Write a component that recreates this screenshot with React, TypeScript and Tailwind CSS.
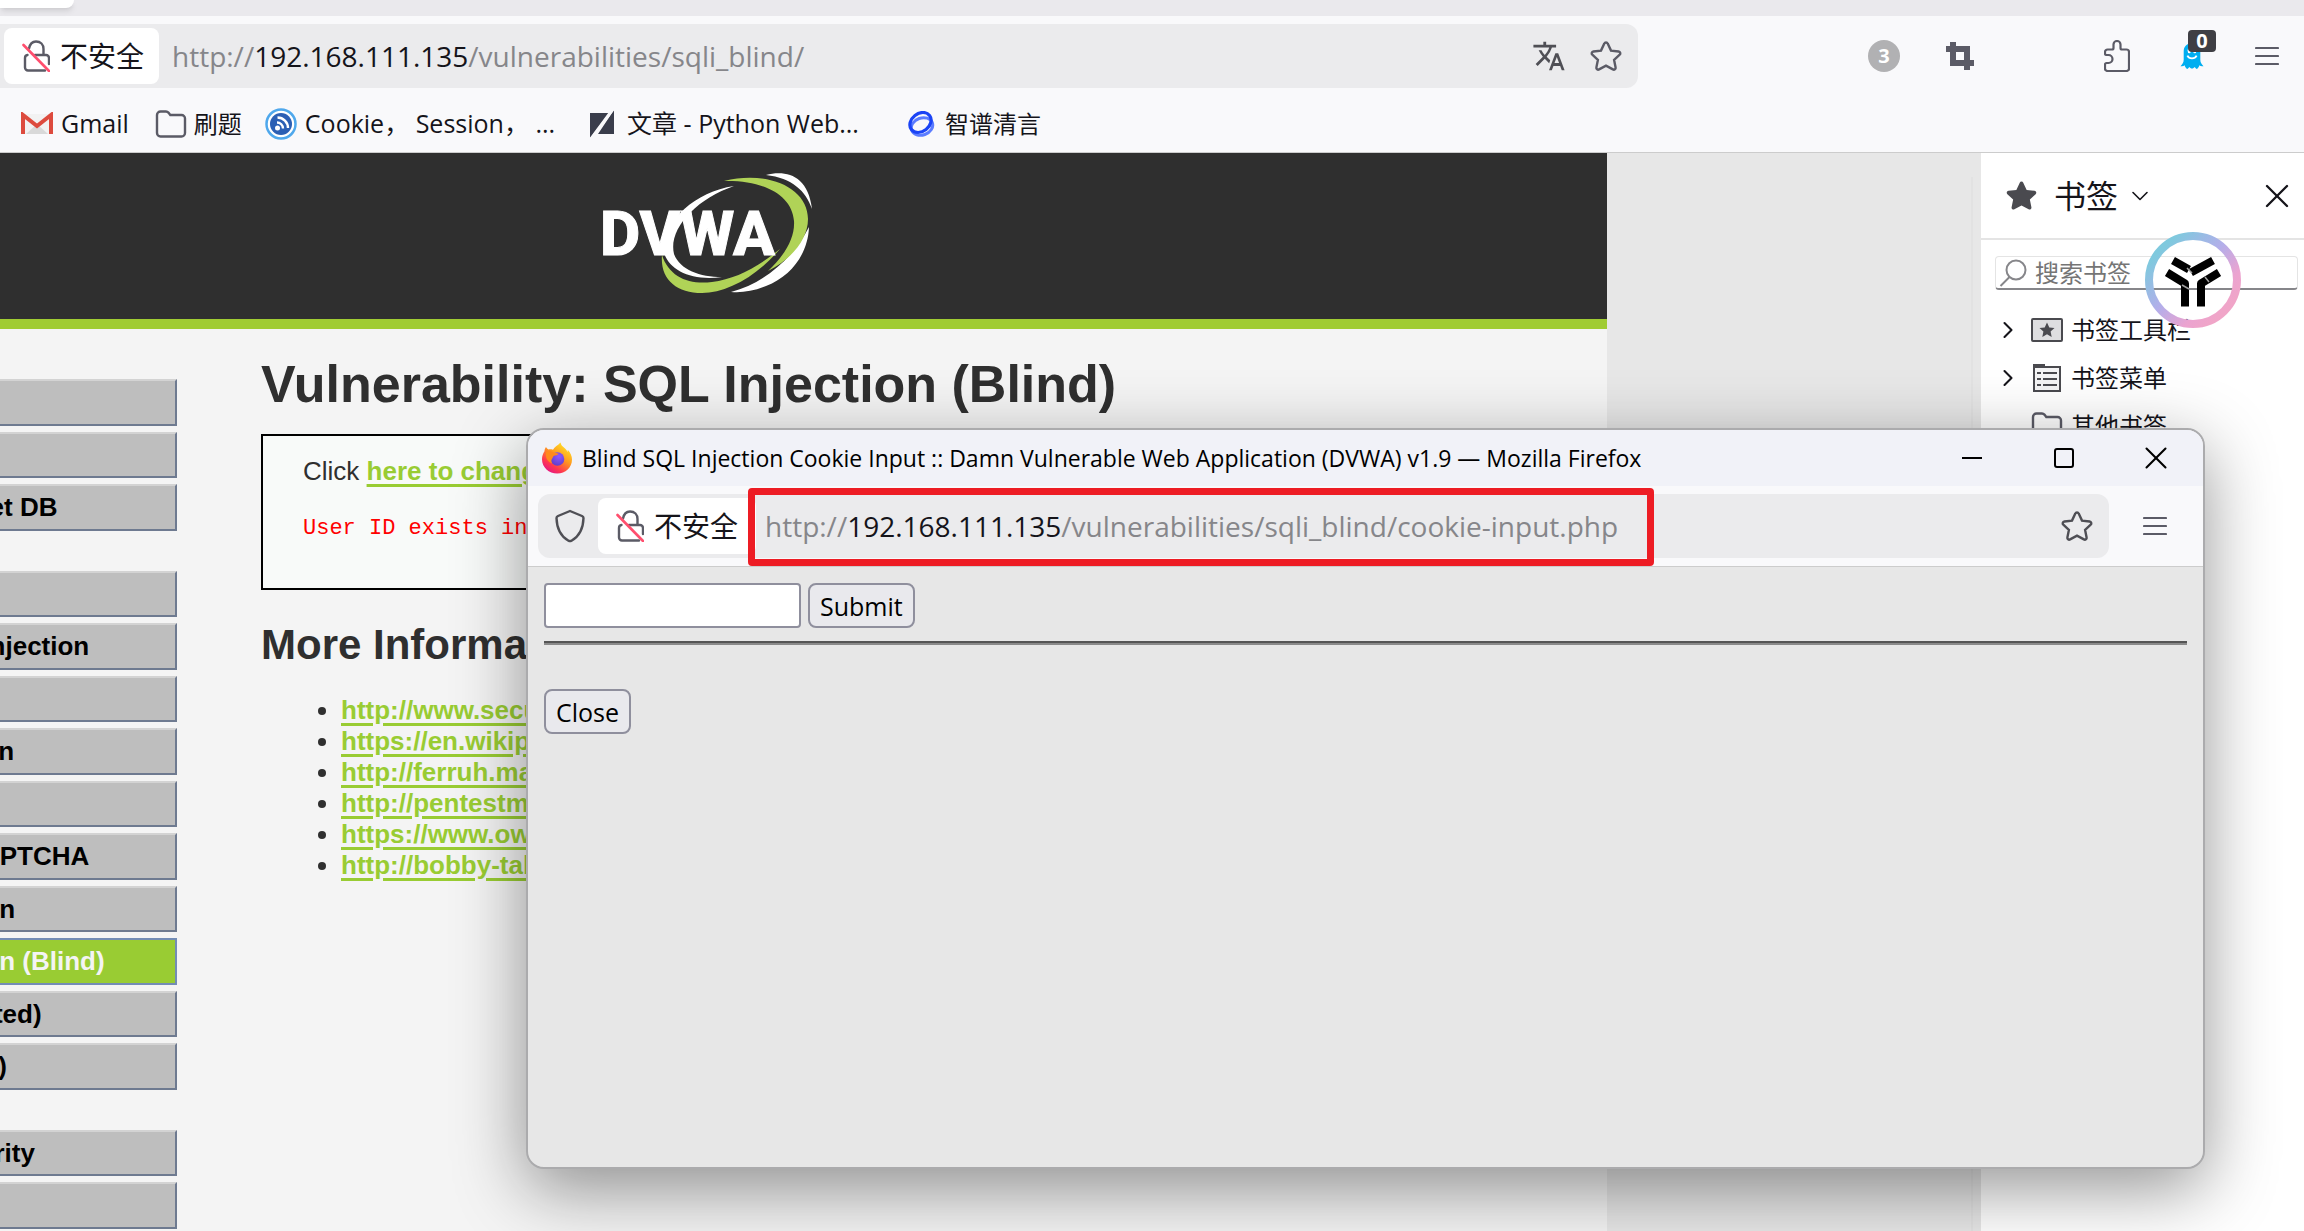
import type { ReactNode } from "react";
import { clsx } from "clsx";
import { ChevronDown, ChevronRight, X } from "lucide-react";
import { MdTranslate } from "react-icons/md";

type MenuItem = {
  label: string;
  startsGroup?: boolean;
  selected?: boolean;
};

const menuItems: MenuItem[] = [
  { label: "Home" },
  { label: "Instructions" },
  { label: "Setup / Reset DB" },
  { label: "Brute Force", startsGroup: true },
  { label: "Command Injection" },
  { label: "CSRF" },
  { label: "File Inclusion" },
  { label: "File Upload" },
  { label: "Insecure CAPTCHA" },
  { label: "SQL Injection" },
  { label: "SQL Injection (Blind)", selected: true },
  { label: "XSS (Reflected)" },
  { label: "XSS (Stored)" },
  { label: "DVWA Security", startsGroup: true },
  { label: "PHP Info" },
];

const moreLinks = [
  "http://www.securiteam.com",
  "https://en.wikipedia.org",
  "http://ferruh.mavituna.com",
  "http://pentestmonkey.net",
  "https://www.owasp.org",
  "http://bobby-tables.com",
];

const STAR =
  "M16 2.500c.8 0 1.400.4 1.700 1.100l3.300 7 7.600.9c1.700.2 2.300 2.100 1.100 3.200l-5.600 5.200 1.500 7.500c.3 1.600-1.300 2.800-2.700 2L16 25.700l-6.900 3.700c-1.400.8-3-.4-2.700-2l1.500-7.500-5.600-5.200c-1.200-1.100-.6-3 1.100-3.200l7.600-.9 3.300-7c.3-.7.9-1.100 1.700-1.100z";

function StarIcon({ filled = false, className }: { filled?: boolean; className?: string }) {
  return (
    <svg viewBox="0 0 32 32" className={className} fill={filled ? "currentColor" : "none"} stroke="currentColor" strokeWidth={filled ? 0 : 2.4}>
      <path d={STAR} />
    </svg>
  );
}

function InsecureLock() {
  return (
    <svg viewBox="0 0 28 32" className="h-8 w-7" fill="none" strokeLinecap="round">
      <path
        d="M7 8.500C8 3.500 11 1.500 14 1.500c4.500 0 7.500 3 7.500 7.500v6M13 15h11a3 3 0 0 1 3 3v6M5.500 15A3 3 0 0 0 3 18v9.500A3 3 0 0 0 6 30.500h17"
        stroke="#5b5b66"
        strokeWidth="2.400"
      />
      <path d="M1.500 5 27 31" stroke="#ff4f6e" strokeWidth="2.600" />
    </svg>
  );
}

function FolderIcon() {
  return (
    <svg viewBox="0 0 32 28" className="h-7 w-8 text-[#5b5b66]" fill="none" stroke="currentColor" strokeWidth="2.400">
      <path d="M2 5a3.500 3.500 0 0 1 3.500-3.500h5.500c1 0 1.800.4 2.400 1.100l1.900 2.400h11.200A3.500 3.500 0 0 1 30 8.500v14.500a3.500 3.500 0 0 1-3.500 3.500h-21A3.500 3.500 0 0 1 2 23z" />
    </svg>
  );
}

function GmailIcon() {
  return (
    <svg viewBox="0 0 32 24" className="h-6 w-8">
      <path d="M2 2h28v20H2z" fill="#f2f2f2" />
      <path d="M5 22 16 12l11 10z" fill="#d9d9d9" />
      <path d="M2 22V3l14 11L30 3v19" fill="none" stroke="#dd4b3e" strokeWidth="4" />
    </svg>
  );
}

function FeedIcon() {
  return (
    <svg viewBox="0 0 32 32" className="size-8" fill="none">
      <circle cx="16" cy="16" r="14.500" stroke="#4fa8ec" strokeWidth="2.500" fill="#fff" />
      <circle cx="16" cy="16" r="11" fill="#2b5fb4" />
      <circle cx="12.500" cy="20" r="2.500" fill="#fff" />
      <path d="M12 14.500a6 6 0 0 1 6 6M12.500 9.500a10.500 10.500 0 0 1 10.500 10.500" stroke="#fff" strokeWidth="2.400" />
    </svg>
  );
}

function SlashIcon() {
  return (
    <svg viewBox="0 0 26 30" className="h-[30px] w-[26px]" fill="#3a3d4b">
      <path d="M1 4h19L1 29zM25 1v24H9z" />
      <path d="M24 0 2 30" stroke="#f9f9fb" strokeWidth="3" />
    </svg>
  );
}

function RingsIcon() {
  return (
    <svg viewBox="0 0 28 26" className="h-[26px] w-7" fill="none">
      <ellipse cx="15" cy="15.500" rx="11" ry="8.500" transform="rotate(-20 15 15.500)" stroke="#5b7cff" strokeWidth="3" />
      <ellipse cx="13.500" cy="11.500" rx="11.500" ry="9" transform="rotate(-38 13.500 11.500)" stroke="#1b44f5" strokeWidth="3.200" />
    </svg>
  );
}

function CropIcon() {
  return (
    <svg viewBox="0 0 28 28" className="size-7" fill="none" stroke="currentColor" strokeWidth="6">
      <path d="M7 0v21h21M0 7h21v21" />
    </svg>
  );
}

function PuzzleIcon() {
  return (
    <svg viewBox="0 0 26 32" className="h-8 w-[26px]" fill="none" stroke="currentColor" strokeWidth="2.200" strokeLinejoin="round">
      <path d="M3.500 9.500H8a1.500 1.500 0 0 0 1.500-1.500V4.500a3.500 3.500 0 0 1 7 0V8A1.500 1.500 0 0 0 18 9.500h4.500A2.500 2.500 0 0 1 25 12v16.500a2.500 2.500 0 0 1-2.500 2.500h-19A2.500 2.500 0 0 1 1 28.500V24.500a1.500 1.500 0 0 1 1.500-1.500h2a4 4 0 0 0 0-8h-2A1.500 1.500 0 0 1 1 13.500V12a2.500 2.500 0 0 1 2.500-2.500z" />
    </svg>
  );
}

function HamburgerIcon() {
  return (
    <svg viewBox="0 0 24 20" className="h-5 w-6" stroke="currentColor" strokeWidth="2.200" strokeLinecap="round">
      <path d="M1 2h22M1 10h22M1 18h22" />
    </svg>
  );
}

function GhostIcon() {
  return (
    <svg viewBox="0 0 26 28" className="h-7 w-6">
      <path d="M13 0c5.500 0 9 4 9 9v9c0 3 1.500 5 3.500 7-2 .5-3.500 0-4.500-1-.5 2-1.500 3.500-3 4-1-.6-1.600-1.200-2-2-.8 1-1.800 1.600-3 1.600s-2.200-.6-3-1.600c-.4.8-1 1.400-2 2-1.500-.5-2.500-2-3-4-1 1-2.500 1.500-4.500 1C2.500 23 4 21 4 18V9c0-5 3.500-9 9-9z" fill="#00aef0" />
      <ellipse cx="10" cy="8" rx="1.800" ry="3" fill="#fff" />
      <ellipse cx="16" cy="8" rx="1.800" ry="3" fill="#fff" />
      <path d="M8 13.500c2 4 8 4 10 0" fill="none" stroke="#fff" strokeWidth="2" />
    </svg>
  );
}

function FirefoxIcon() {
  return (
    <svg viewBox="0 0 32 32" className="size-8">
      <defs>
        <linearGradient id="fx-body" x1="0.850" y1="0.100" x2="0.250" y2="1">
          <stop offset="0" stopColor="#ffe226" />
          <stop offset="0.400" stopColor="#ff9a1f" />
          <stop offset="0.750" stopColor="#ff3750" />
          <stop offset="1" stopColor="#e31587" />
        </linearGradient>
        <radialGradient id="fx-globe" cx="0.600" cy="0.300" r="0.800">
          <stop offset="0" stopColor="#9059ff" />
          <stop offset="1" stopColor="#5b3bc4" />
        </radialGradient>
      </defs>
      <path
        d="M19.500.5c.5 2.500 2 4 4 5.500 1.500 1.200 2.500 2.500 3 4 .3-.8.300-1.500.2-2.300C29.500 10.500 31 14 31 17.500 31 25.500 24.500 31.500 16.200 31.500S1 25.300 1 17.200c0-3.200 1-5.800 2.500-8 .1-1.500.5-3 1.500-4.200.6 1 1.500 2 2.500 2.500 1.500-.3 3-.2 4.500.3C13.500 4.500 17 3.500 19.500.5z"
        fill="url(#fx-body)"
      />
      <circle cx="16.500" cy="17" r="6.800" fill="url(#fx-globe)" />
      <path d="M5 10c3-1.500 6-1 8.500 1 1.500-.3 3 0 4.200 1-1.500 1.200-3.200 1.300-4.700 1.800-1 .7-1 1.700-1.800 2.700-1.200 1.500-1 3.500 0 5C7 20 4 16 5 10z" fill="#ff8a1c" />
    </svg>
  );
}

function DvwaLogo() {
  return (
    <svg viewBox="0 0 210 121" className="h-[121px] w-[210px]" role="img" aria-label="DVWA">
      <path d="M132 14C94 27 66 57 72 82c6 16 26 23 48 23-30 4-52-6-58-24C60 50 92 20 132 14z" fill="#fff" />
      <path d="M164 3c20-5 42 0 46 34-6-18-20-31-46-34zM207 55c-1 26-17 49-43 59-12 5-24 7-35 6 34-9 62-34 78-65z" fill="#fff" />
      <path d="M122 9c44-11 84 7 84 38 0 20-16 40-40 52 18-17 27-34 26-50-2-26-30-41-70-40zM60 83c7 22 27 30 50 27 24-3 46-15 68-33-24 28-54 44-78 44-26 0-42-14-40-38z" fill="#b0d357" />
      <text x="-2" y="83" fontSize="62" fontWeight="800" fill="#fff" stroke="#fff" strokeWidth="1" className="font-['Roboto',sans-serif]">
        DVWA
      </text>
    </svg>
  );
}

function IconButton({ label, className, children }: { label: string; className?: string; children: ReactNode }) {
  return (
    <button type="button" aria-label={label} className={clsx("flex shrink-0 items-center justify-center", className)}>
      {children}
    </button>
  );
}

function Identity({ className }: { className?: string }) {
  return (
    <button type="button" className={clsx("flex h-14 shrink-0 items-center gap-2.5 rounded-lg bg-white text-[28px] text-[#15141a]", className)}>
      <InsecureLock />
      不安全
    </button>
  );
}

function Address({ path }: { path: string }) {
  return (
    <span className="whitespace-nowrap text-[28px] text-[#86868a]">
      http://<span className="text-[#15141a]">192.168.111.135</span>
      {path}
    </span>
  );
}

function Bookmark({ icon, children, className }: { icon: ReactNode; children: ReactNode; className?: string }) {
  return (
    <a href="#" className={clsx("flex items-center whitespace-nowrap text-[#15141a]", className)}>
      {icon}
      {children}
    </a>
  );
}

function BrowserChrome() {
  return (
    <header className="shrink-0 border-b border-[#cccccc] bg-[#f9f9fb]">
      <div className="h-4 bg-[#eae9ed]">
        <div className="h-2 w-[74px] rounded-br-lg bg-white shadow-md" />
      </div>
      <div className="flex h-20 items-center">
        <div className="flex h-16 w-[1638px] items-center rounded-r-xl bg-[#ebebed] pl-1 pr-4">
          <Identity className="w-[155px] pl-[18px]" />
          <div className="flex-1 pl-[13px]">
            <Address path="/vulnerabilities/sqli_blind/" />
          </div>
          <IconButton label="Translate" className="mr-6 text-[#4f4f55]">
            <MdTranslate className="size-[34px]" />
          </IconButton>
          <IconButton label="Bookmark" className="text-[#5b5b66]">
            <StarIcon className="size-8" />
          </IconButton>
        </div>
        <div className="flex flex-1 items-center justify-end pr-[25px] text-[#5b5b66]">
          <span className="mr-[46px] flex size-8 items-center justify-center rounded-full bg-[#b1b1b3] text-[20px] font-bold text-white">3</span>
          <IconButton label="Screenshot" className="mr-[130px]">
            <CropIcon />
          </IconButton>
          <IconButton label="Extensions" className="mr-[50px]">
            <PuzzleIcon />
          </IconButton>
          <IconButton label="Ghostery" className="relative mr-[51px]">
            <GhostIcon />
            <span className="absolute -top-3 left-2 flex h-[22px] w-7 items-center justify-center rounded bg-[#3f3f44] text-[20px] font-bold text-white">0</span>
          </IconButton>
          <IconButton label="Menu">
            <HamburgerIcon />
          </IconButton>
        </div>
      </div>
      <nav className="flex h-14 items-center pl-[21px]">
        <Bookmark className="gap-2 text-[25px]" icon={<GmailIcon />}>Gmail</Bookmark>
        <Bookmark className="ml-[26px] gap-[7px] text-[24px]" icon={<FolderIcon />}>刷题</Bookmark>
        <Bookmark className="ml-[23px] gap-2 text-[25px]" icon={<FeedIcon />}>Cookie， Session， ...</Bookmark>
        <Bookmark className="ml-[34px] gap-3 text-[25px]" icon={<SlashIcon />}>文章 - Python Web...</Bookmark>
        <Bookmark className="ml-[48px] gap-2.5 text-[24px]" icon={<RingsIcon />}>智谱清言</Bookmark>
      </nav>
    </header>
  );
}

function MainMenu() {
  return (
    <ul className="-ml-[170px] mt-[50px] flex w-[347px] shrink-0 flex-col">
      {menuItems.map((item) => (
        <li key={item.label} className={clsx("mb-1.5 odd:h-[47px] even:h-[46px]", item.startsGroup && "mt-[34px]")}>
          <a
            href="#"
            className={clsx(
              "flex h-full items-center border-2 pl-4 text-[26px] font-bold",
              item.selected
                ? "border-[#738cb5] bg-[#99cc33] text-[#f4f4f4]"
                : "border-[#6e7a90] border-t-[#d3d3d3] bg-[#bebebe] text-black",
            )}
          >
            {item.label}
          </a>
        </li>
      ))}
    </ul>
  );
}

function DvwaPage() {
  return (
    <div className="w-[1607px] shrink-0 overflow-hidden bg-[#f4f4f4] font-['Liberation_Sans',Arial,sans-serif] text-[#2f2f2f]">
      <div className="flex h-44 justify-center border-b-10 border-[#a0cc33] bg-[#2f2f2f] pr-[193px] pt-[19px]">
        <DvwaLogo />
      </div>
      <div className="flex">
        <MainMenu />
        <main className="ml-[84px] flex-1 whitespace-nowrap pt-[25px]">
          <h1 className="text-[52px] leading-[60px] font-bold">Vulnerability: SQL Injection (Blind)</h1>
          <div className="mt-5 mr-10 h-[156px] border-2 border-black bg-[#f8faf9] px-10 pt-5">
            <p className="text-[26px] leading-[30px]">
              Click{" "}
              <a href="#" className="font-bold text-[#99cc33] underline decoration-3 underline-offset-4">
                here to change your ID
              </a>
              .
            </p>
            <pre className="mt-7 font-['Liberation_Mono',monospace] text-[22px] leading-[30px] text-[#ff0000]">User ID exists in the database.</pre>
          </div>
          <h2 className="mt-[31px] text-[42px] leading-[48px] font-bold">More Information</h2>
          <ul className="mt-[26px] list-disc pl-20 text-[26px] leading-[31px]">
            {moreLinks.map((link) => (
              <li key={link}>
                <a href="#" className="font-bold text-[#99cc33] underline decoration-3 underline-offset-4">
                  {link}
                </a>
              </li>
            ))}
          </ul>
        </main>
      </div>
    </div>
  );
}

function ToolbarFolderIcon() {
  return (
    <svg viewBox="0 0 32 26" className="h-[26px] w-8">
      <rect x="1" y="2" width="30" height="22" rx="1" fill="#dedee0" stroke="#4a4a4f" strokeWidth="2" />
      <path d="m16 5.500 2.300 4.900 5.200.6-3.900 3.600 1.100 5.400-4.700-2.700-4.700 2.700 1.100-5.400-3.900-3.600 5.200-.6z" fill="#4a4a4f" />
    </svg>
  );
}

function MenuFolderIcon() {
  return (
    <svg viewBox="0 0 32 28" className="h-7 w-8" fill="none" stroke="#4a4a4f" strokeWidth="2">
      <path d="M3 3h26v24H3z" fill="#f4f4f5" />
      <path d="M2 1.500h12" strokeWidth="3" />
      <path d="M6 9h4M12 9h14M6 15h4M12 15h14M6 21h4M12 21h14" />
    </svg>
  );
}

function TreeRow({ icon, label, expandable = false }: { icon: ReactNode; label: string; expandable?: boolean }) {
  return (
    <li className="flex h-12 items-center text-[24px]">
      <span className="flex w-9 justify-center pr-2.5">
        {expandable ? <ChevronRight className="size-7 shrink-0" strokeWidth={1.8} /> : null}
      </span>
      {icon}
      <span className="ml-2">{label}</span>
    </li>
  );
}

function BookmarksSidebar() {
  return (
    <aside className="flex flex-1 flex-col bg-white text-[#15141a]">
      <div className="flex h-[87px] items-center border-b-2 border-[#e4e4e4] pl-6 pr-[7px]">
        <StarIcon filled className="size-[33px] text-[#4a4a4f]" />
        <button type="button" className="ml-4 flex items-center gap-2 text-[32px]">
          书签
          <ChevronDown className="size-7" strokeWidth={1.4} />
        </button>
        <IconButton label="Close sidebar" className="ml-auto">
          <X className="size-10" strokeWidth={1.4} />
        </IconButton>
      </div>
      <label className="mx-3.5 mr-1.5 mt-4 flex h-[34px] items-center gap-2 rounded-sm border border-[#e4e4e4] border-b-2 border-b-[#86868a] pl-[3px]">
        <svg viewBox="0 0 28 28" className="size-7 shrink-0" fill="none" stroke="#86868a" strokeWidth="2">
          <circle cx="17" cy="11" r="9.500" />
          <path d="M10.500 18 1.500 27" />
        </svg>
        <input type="search" placeholder="搜索书签" aria-label="搜索书签" className="w-full min-w-0 bg-transparent text-[24px] outline-none placeholder:text-[#757575]" />
      </label>
      <ul className="mt-4 pl-3.5">
        <TreeRow expandable icon={<ToolbarFolderIcon />} label="书签工具栏" />
        <TreeRow expandable icon={<MenuFolderIcon />} label="书签菜单" />
        <TreeRow icon={<FolderIcon />} label="其他书签" />
      </ul>
    </aside>
  );
}

function FloatingBadge() {
  return (
    <svg viewBox="0 0 96 96" className="absolute right-[63px] top-[232px] size-24" fill="none">
      <defs>
        <linearGradient id="badge-ring" x1="0.150" y1="0.150" x2="0.850" y2="0.850">
          <stop offset="0" stopColor="#7fc9de" />
          <stop offset="0.450" stopColor="#b3aeea" />
          <stop offset="0.800" stopColor="#eba3d0" />
          <stop offset="1" stopColor="#f0a5c8" />
        </linearGradient>
      </defs>
      <circle cx="48" cy="48" r="44" stroke="url(#badge-ring)" strokeWidth="8" />
      <g stroke="#000" strokeWidth="8" strokeLinejoin="round">
        <path d="M28 28.500 44 37.500M68 28.500 46 40.500" />
        <path d="M22 40.500 40 51.500v23M74 40.500 56 51.500v23" />
      </g>
      <path d="m42 36 5 5M37 53l7 4M60 45l4 5" stroke="#a0a0a0" strokeWidth="1.500" />
    </svg>
  );
}

function PopupWindow() {
  return (
    <section className="absolute left-[526px] right-[99px] top-[428px] flex h-[741px] flex-col overflow-hidden rounded-[18px] border-2 border-[#ababad] bg-[#e7e7e7] bg-clip-padding shadow-[0_20px_70px_rgba(0,0,0,0.42)]">
      <div className="flex h-14 shrink-0 items-center bg-[#f1f2f8] pl-[13px] pr-8 text-black">
        <FirefoxIcon />
        <h2 className="ml-[9px] whitespace-nowrap text-[23px]">
          Blind SQL Injection Cookie Input :: Damn Vulnerable Web Application (DVWA) v1.9 — Mozilla Firefox
        </h2>
        <div className="ml-auto flex items-center gap-[62px]">
          <IconButton label="Minimize" className="size-[30px]">
            <span className="h-0.5 w-5 bg-black" />
          </IconButton>
          <IconButton label="Maximize" className="size-[30px]">
            <span className="size-5 rounded-[3px] border-2 border-black" />
          </IconButton>
          <IconButton label="Close window" className="size-[30px]">
            <X className="size-[38px] shrink-0" strokeWidth={1.3} />
          </IconButton>
        </div>
      </div>
      <div className="flex h-[81px] shrink-0 items-center border-b border-[#cccccc] bg-[#f9f9fb] pl-2.5 pr-9">
        <div className="relative flex h-16 flex-1 items-center rounded-xl bg-[#ebebed] pl-[17px] pr-4">
          <IconButton label="Tracking protection">
            <svg viewBox="0 0 30 34" className="h-[34px] w-[30px]" fill="none" stroke="#4f4f55" strokeWidth="2.400" strokeLinejoin="round">
              <path d="M15 2 27 7c1 .5 1.500 1 1.500 2-.3 11-4.500 18.500-12 22.700-1 .5-2 .5-3 0C6 27.500 1.800 20 1.500 9c0-1 .5-1.500 1.500-2z" />
            </svg>
          </IconButton>
          <Identity className="ml-[13px] w-[158px] pl-[18px]" />
          <div className="flex-1 pl-[9px]">
            <Address path="/vulnerabilities/sqli_blind/cookie-input.php" />
          </div>
          <IconButton label="Bookmark" className="text-[#4f4f55]">
            <StarIcon className="size-8" />
          </IconButton>
          {/* highlight drawn over the address */}
          <div className="pointer-events-none absolute -top-1.5 left-[210px] h-[78px] w-[906px] rounded border-[7px] border-[#ed1c24]" />
        </div>
        <IconButton label="Menu" className="ml-[34px] text-[#5b5b66]">
          <HamburgerIcon />
        </IconButton>
      </div>
      <form className="px-4 pt-4 text-black">
        <div className="flex gap-[7px]">
          <input aria-label="Session ID" className="h-[45px] w-[257px] rounded border-2 border-[#8f8f9d] bg-white px-2 text-[25px]" />
          <button type="button" className="h-[45px] rounded-lg border-2 border-[#8f8f9d] bg-[#e9e9ed] px-2.5 text-[25px] leading-[38px]">
            Submit
          </button>
        </div>
        <hr className="mt-[13px] h-1 border-t-2 border-b-2 border-t-[#555555] border-b-[#8a8a8a]" />
        <button type="button" className="mt-11 h-[45px] rounded-lg border-2 border-[#8f8f9d] bg-[#e9e9ed] px-2.5 text-[25px] leading-[38px]">
          Close
        </button>
      </form>
    </section>
  );
}

export default function App() {
  return (
    <div className="relative flex h-screen flex-col overflow-hidden bg-[#e7e7e7] font-['Open_Sans','Noto_Sans_CJK_SC',sans-serif]">
      <BrowserChrome />
      <div className="flex min-h-0 flex-1">
        <DvwaPage />
        <div className="mt-6 mr-2 w-[366px] shrink-0 border-r-2 border-[#e2e2e2]" />
        <BookmarksSidebar />
      </div>
      <PopupWindow />
      <FloatingBadge />
    </div>
  );
}
